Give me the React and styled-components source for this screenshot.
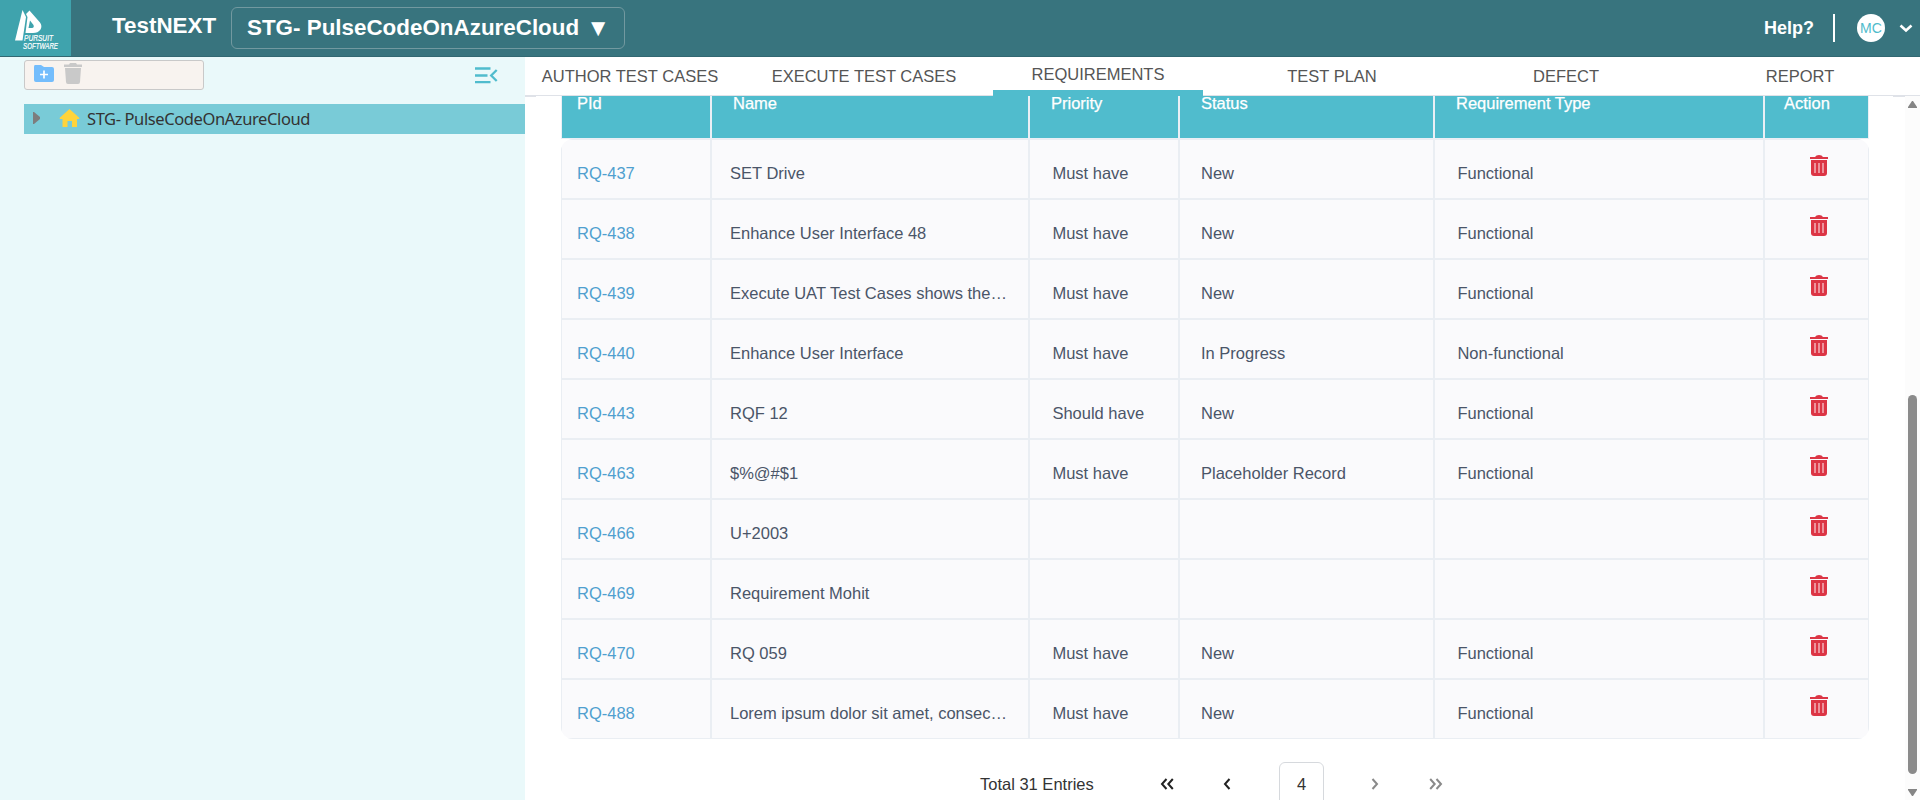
import React from "react";
import styled, { createGlobalStyle } from "styled-components";

const Global = createGlobalStyle`
  * { box-sizing: border-box; }
  body { margin: 0; background: #fff; overflow: hidden; font-family: "Liberation Sans", Arial, sans-serif; }
  svg { display: block; flex: none; overflow: visible; }
`;

const Page = styled.div`
  display: flex;
  flex-direction: column;
  height: 800px;
  overflow: hidden;
`;
const TopBar = styled.header`
  display: flex;
  height: 57px;
  flex: none;
  background: #38747e;
  border-bottom: 1px solid #326872;
  color: #fff;
`;
const Logo = styled.div`
  width: 71px;
  height: 56px;
  background: #3fa3ad;
`;
const Brand = styled.div`
  margin-left: 41px;
  padding-top: 12px;
  width: 119px;
  font-size: 22.4px;
  line-height: 28px;
  font-weight: 700;
  white-space: nowrap;
`;
const ProjectPicker = styled.button`
  display: flex;
  align-items: center;
  gap: 7px;
  margin: 7px 0 0;
  width: 394px;
  height: 42px;
  padding: 0 0 1px 15px;
  background: transparent;
  border: 1px solid #7299a0;
  border-radius: 6px;
  color: #fff;
  font: 700 22.4px "Liberation Sans", Arial, sans-serif;
  white-space: nowrap;
`;
const PickerArrow = styled.span`
  font-size: 24px;
`;
const UserArea = styled.div`
  display: flex;
  align-items: center;
  margin-left: auto;
  padding-right: 7px;
`;
const Help = styled.span`
  font-size: 18px;
  font-weight: 700;
  width: 69px;
`;
const Divider = styled.span`
  width: 2px;
  height: 28px;
  background: #fff;
  margin-right: 22px;
`;
const Avatar = styled.span`
  width: 28px;
  height: 28px;
  border-radius: 50%;
  background: #fff;
  color: #50bccc;
  font-size: 14px;
  line-height: 29px;
  text-align: center;
  margin-right: 14px;
`;
const Body = styled.div`
  display: flex;
  flex: 1;
  min-height: 0;
`;
const Sidebar = styled.aside`
  width: 525px;
  flex: none;
  background: #eaf9fa;
  padding-left: 24px;
`;
const SideTools = styled.div`
  display: flex;
  height: 47px;
  padding-top: 3px;
`;
const ToolBox = styled.div`
  display: flex;
  align-items: flex-start;
  width: 180px;
  height: 30px;
  padding: 2px 0 0 8px;
  gap: 9px;
  background: #f8f3ef;
  border: 1px solid #c9c9c9;
  border-radius: 3px;
`;
const Collapse = styled.div`
  margin: 7px 0 0 270px;
`;
const TreeRow = styled.div`
  display: flex;
  align-items: center;
  height: 30px;
  background: #79cbd7;
  color: #333;
  font-family: "Noto Sans", sans-serif;
  font-size: 16.5px;
  letter-spacing: -0.4px;
`;
const TreeArrow = styled.div`
  width: 29px;
  padding: 0 0 3px 9px;
`;
const TreeIcon = styled.div`
  width: 34px;
  padding: 0 0 2px 6px;
`;
const TreeLabel = styled.span`
  padding-bottom: 2px;
`;
const Main = styled.main`
  display: flex;
  flex-direction: column;
  width: 1395px;
`;
const Tabs = styled.nav`
  display: flex;
  height: 39px;
  flex: none;
  border-bottom: 1px solid #dfe2e8;
`;
const Tab = styled.div`
  width: ${(p) => p.$w}px;
  flex: none;
  height: 39px;
  padding-top: ${(p) => (p.$active ? 5 : 7)}px;
  border-bottom: ${(p) => (p.$active ? "6px solid #50bccd" : "0")};
  color: #555;
  font-size: 16.5px;
  line-height: 24px;
  text-align: center;
  white-space: nowrap;
`;
const Content = styled.div`
  display: flex;
  flex: 1;
  min-height: 0;
`;
const Panel = styled.section`
  flex: 1;
  padding-left: 36px;
  background:
    linear-gradient(#dfe2e8, #dfe2e8) 0 0 / 11px 1px no-repeat,
    linear-gradient(#dfe2e8, #dfe2e8) 100% 0 / 12px 1px no-repeat;
`;
const columns = "150px 318px 150px 255px 330px 105px";
const HeadRow = styled.div`
  display: grid;
  grid-template-columns: ${columns};
  width: 1308px;
  height: 43px;
`;
const HeadCell = styled.div`
  padding-left: ${(p) => p.$pad}px;
  background: #50bccd;
  border: 1px solid #eaeff5;
  border-top: 0;
  color: #fff;
  font-size: 16.5px;
  line-height: 14px;
  -webkit-text-stroke: 0.25px #fff;
  white-space: nowrap;
`;
const Rows = styled.div`
  width: 1308px;
  border-radius: 12px;
  overflow: hidden;
`;
const Row = styled.div`
  display: grid;
  grid-template-columns: ${columns};
  height: 60px;
`;
const Cell = styled.div`
  min-width: 0;
  padding: 20px 0 0 ${(p) => p.$pad}px;
  background: #fafafc;
  border: 1px solid #eaeef3;
  color: ${(p) => (p.$link ? "#4f9fcf" : "#4a5568")};
  font-size: 16.5px;
  line-height: 26px;
  white-space: nowrap;
`;
const ActionCell = styled(Cell)`
  padding: 15px 0 0 45px;
`;
const Pager = styled.div`
  display: flex;
  align-items: center;
  height: 44px;
  margin-top: 23px;
  padding-left: 419px;
  color: #333;
  font-size: 16.5px;
`;
const Total = styled.span`
  width: 180px;
`;
const PageStep = styled.span`
  width: ${(p) => p.$w}px;
  color: ${(p) => (p.$off ? "#8a8a8a" : "#222")};
`;
const PageNumber = styled.span`
  width: 45px;
  height: 44px;
  margin-right: 41px;
  border: 1px solid #d6d9dd;
  border-radius: 6px;
  line-height: 43px;
  text-align: center;
`;
const ScrollTrack = styled.div`
  display: flex;
  flex-direction: column;
  align-items: center;
  width: 15px;
  padding-top: 5px;
  background: #fcfcfc;
`;
const Thumb = styled.div`
  width: 9px;
  height: 379px;
  margin: 287px 0 15px;
  border-radius: 5px;
  background: #8b8b8b;
`;

const LogoMark = () => (
  <svg width="71" height="56" viewBox="0 0 71 56" fill="#fff">
    <path d="M22.500 10L26 17l-3.500 23.500H15z" />
    <path fillRule="evenodd" d="M29.500 10.500L40 22.500Q42.500 26 40.500 29.500 38 33 33 33H25.500L27.500 17 26 14zM30 20.500L28.500 28H32q2.500-.5 1.500-3z" />
    <g fontFamily="Liberation Sans, sans-serif" fontSize="8.500" fontStyle="italic" stroke="#fff" strokeWidth="0.200">
      <text x="24" y="41" textLength="29" lengthAdjust="spacingAndGlyphs">PURSUIT</text>
      <text x="23" y="49" textLength="35" lengthAdjust="spacingAndGlyphs">SOFTWARE</text>
    </g>
  </svg>
);
const TrashRed = () => (
  <svg width="18" height="21" viewBox="0 0 18 21">
    <path fill="#dc3545" d="M0 2h5q1-2 4-2t4 2h5v2H0z" />
    <path fill="#dc3545" d="M1 5h16v13q0 3-3 3H4q-3 0-3-3z" />
    <path stroke="#f3b3bb" strokeWidth="1.500" d="M5 8v10M9 8v10M13 8v10" />
  </svg>
);
const Chevron = ({ double, right }) => (
  <svg width="14" height="12" viewBox="0 0 14 12" fill="none" stroke="currentColor" strokeWidth="2" transform={right ? "scale(-1 1)" : undefined}>
    <path d="M6.500 1L2 6l4.500 5" />
    {double && <path d="M12.800 1L8.300 6l4.500 5" />}
  </svg>
);
const ScrollArrow = ({ down }) => (
  <svg width="9" height="7" viewBox="0 0 9 7" fill="#858585">
    <path d={down ? "M0 0h9v1L5 7H4L0 1z" : "M4 0h1l4 6v1H0V6z"} />
  </svg>
);
const AddFolder = () => (
  <svg width="22" height="21" viewBox="0 0 22 21">
    <path fill="#74bdfc" d="M2 2h6l3 2h8q2 0 2 2v11q0 2-2 2H3q-2 0-2-2V4q0-2 1-2z" />
    <path stroke="#fff" strokeWidth="1.700" d="M11 7.500v8M7 11.500h8" />
  </svg>
);
const TrashGrey = () => (
  <svg width="18" height="21" viewBox="0 0 18 21" fill="#c9c9c9">
    <path d="M0 1.500h5L6 0h6l1 1.500h5V4H0zM1 5h16l-1 14q0 2-2 2H4q-2 0-2-2z" />
  </svg>
);
const CollapseIcon = () => (
  <svg width="24" height="17" viewBox="0 0 24 17" fill="none" stroke="#50bccd" strokeWidth="2.300">
    <path d="M1 1.500h15.500M1 8.500h12.500M1 15.200h15.500M22.700 3l-5.500 5.500 5.500 5.500" />
  </svg>
);

const tabs = [
  ["AUTHOR TEST CASES", 210],
  ["EXECUTE TEST CASES", 258],
  ["REQUIREMENTS", 210],
  ["TEST PLAN", 258],
  ["DEFECT", 210],
  ["REPORT", 258],
];
const heads = [["PId", 15], ["Name", 21], ["Priority", 21], ["Status", 21], ["Requirement Type", 21], ["Action", 19]];
const data = [
  ["RQ-437", "SET Drive", "Must have", "New", "Functional"],
  ["RQ-438", "Enhance User Interface 48", "Must have", "New", "Functional"],
  ["RQ-439", "Execute UAT Test Cases shows the…", "Must have", "New", "Functional"],
  ["RQ-440", "Enhance User Interface", "Must have", "In Progress", "Non-functional"],
  ["RQ-443", "RQF 12", "Should have", "New", "Functional"],
  ["RQ-463", "$%@#$1", "Must have", "Placeholder Record", "Functional"],
  ["RQ-466", "U+2003", "", "", ""],
  ["RQ-469", "Requirement Mohit", "", "", ""],
  ["RQ-470", "RQ 059", "Must have", "New", "Functional"],
  ["RQ-488", "Lorem ipsum dolor sit amet, consec…", "Must have", "New", "Functional"],
];
const pads = [15, 18, 22.4, 21, 22.4];

export default function App() {
  return (
    <Page>
      <Global />
      <TopBar>
        <Logo><LogoMark /></Logo>
        <Brand>TestNEXT</Brand>
        <ProjectPicker>STG- PulseCodeOnAzureCloud <PickerArrow>▼</PickerArrow></ProjectPicker>
        <UserArea>
          <Help>Help?</Help>
          <Divider />
          <Avatar>MC</Avatar>
          <svg width="14" height="9" viewBox="0 0 14 9" fill="none" stroke="#fff" strokeWidth="2.600"><path d="M1.500 1.500L7 6.500l5.500-5" /></svg>
        </UserArea>
      </TopBar>
      <Body>
        <Sidebar>
          <SideTools>
            <ToolBox>
              <AddFolder />
              <TrashGrey />
            </ToolBox>
            <Collapse><CollapseIcon /></Collapse>
          </SideTools>
          <TreeRow>
            <TreeArrow><svg width="7" height="12" viewBox="0 0 7 12" fill="#7d7d7d"><path d="M0 0h1l6 5v2l-6 5H0z" /></svg></TreeArrow>
            <TreeIcon><svg width="21" height="18" viewBox="0 0 21 18" fill="#ffd43b"><path d="M10.500 0L20.500 9l-.5 1h-2v8h-5v-6H8.500v6H3.500v-8H1L.5 9z" /></svg></TreeIcon>
            <TreeLabel>STG- PulseCodeOnAzureCloud</TreeLabel>
          </TreeRow>
        </Sidebar>
        <Main>
          <Tabs>
            {tabs.map(([name, w]) => <Tab key={name} $w={w} $active={name === "REQUIREMENTS"}>{name}</Tab>)}
          </Tabs>
          <Content>
            <Panel>
              <HeadRow>{heads.map(([h, pad]) => <HeadCell key={h} $pad={pad}>{h}</HeadCell>)}</HeadRow>
              <Rows>
                {data.map((r) => (
                  <Row key={r[0]}>
                    {r.map((v, i) => <Cell key={i} $pad={pads[i]} $link={i === 0}>{v}</Cell>)}
                    <ActionCell><TrashRed /></ActionCell>
                  </Row>
                ))}
              </Rows>
              <Pager>
                <Total>Total 31 Entries</Total>
                <PageStep $w={63}><Chevron double /></PageStep>
                <PageStep $w={56}><Chevron /></PageStep>
                <PageNumber>4</PageNumber>
                <PageStep $w={64} $off><Chevron right /></PageStep>
                <PageStep $w={14} $off><Chevron double right /></PageStep>
              </Pager>
            </Panel>
            <ScrollTrack>
              <ScrollArrow />
              <Thumb />
              <ScrollArrow down />
            </ScrollTrack>
          </Content>
        </Main>
      </Body>
    </Page>
  );
}
